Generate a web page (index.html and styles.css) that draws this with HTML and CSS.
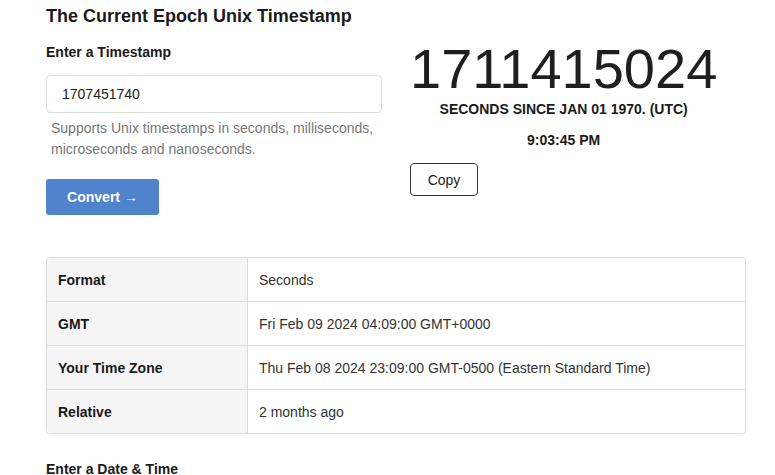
FILE: index.html
```html
<!DOCTYPE html>
<html lang="en">
<head>
    <meta charset="UTF-8">
    <meta name="viewport" content="width=device-width, initial-scale=1.0">
    <title>Epoch Converter</title>
    <link rel="stylesheet" href="styles.css">
</head>
<body>
<div class="page">
    <h2 class="title">The Current Epoch Unix Timestamp</h2>

    <div class="top">
        <div class="converter">
            <label class="label" for="stamp">Enter a Timestamp</label>
            <input type="text" id="stamp" class="stamp-input" value="1707451740">
            <p class="help">Supports Unix timestamps in seconds, milliseconds, microseconds and nanoseconds.</p>
            <button class="convert-btn">Convert &rarr;</button>
        </div>

        <div class="clock">
            <div class="clock-face">
                <div class="epoch" id="epoch">1711415024</div>
                <div class="since">SECONDS SINCE JAN 01 1970. (UTC)</div>
                <div class="time" id="time">9:03:45 PM</div>
            </div>
            <button class="copy-btn">Copy</button>
        </div>
    </div>

    <table class="results">
        <tr>
            <th>Format</th>
            <td>Seconds</td>
        </tr>
        <tr>
            <th>GMT</th>
            <td>Fri Feb 09 2024 04:09:00 GMT+0000</td>
        </tr>
        <tr>
            <th>Your Time Zone</th>
            <td>Thu Feb 08 2024 23:09:00 GMT-0500 (Eastern Standard Time)</td>
        </tr>
        <tr>
            <th>Relative</th>
            <td>2 months ago</td>
        </tr>
    </table>

    <div class="label date-label">Enter a Date &amp; Time</div>
</div>
</body>
</html>
```

FILE: styles.css
```css
body {
    margin: 0;
    font-family: "Liberation Sans", Arial, sans-serif;
    font-size: 14px;
    color: #222;
    background-color: #fff;
}

.page {
    width: 700px;
    margin-left: 46px;
}

.title {
    margin: 0;
    padding-top: 5px;
    font-size: 18px;
    line-height: 22px;
    font-weight: bold;
    color: #1a1a1a;
}

.top {
    display: flex;
    margin-top: 17px;
}

.converter {
    width: 336px;
    display: flex;
    flex-direction: column;
    align-items: flex-start;
}

.label {
    display: block;
    font-weight: bold;
    font-size: 14px;
    line-height: 17px;
    color: #1a1a1a;
}

.stamp-input {
    box-sizing: border-box;
    width: 336px;
    height: 38px;
    margin-top: 14px;
    padding: 0 15px;
    border: 1px solid #ddd;
    border-radius: 4px;
    font-family: inherit;
    font-size: 14px;
    color: #222;
}

.help {
    margin: 5px 0 0 5px;
    font-size: 14px;
    line-height: 21px;
    color: #777;
}

.convert-btn {
    margin-top: 19px;
    width: 113px;
    height: 36px;
    border: none;
    border-radius: 3px;
    background-color: #4f84cc;
    color: #fff;
    font-family: inherit;
    font-size: 14px;
    font-weight: bold;
}

.clock {
    margin-left: 28px;
    display: flex;
    flex-direction: column;
    align-items: flex-start;
}

.clock-face {
    text-align: center;
}

.epoch {
    font-size: 56px;
    line-height: 56px;
    margin-top: -3px;
    color: #1f1f1f;
}

.since,
.time {
    font-size: 14px;
    font-weight: bold;
    color: #1a1a1a;
    line-height: 16px;
}

.since {
    margin-top: 4px;
}

.time {
    margin-top: 15px;
}

.copy-btn {
    margin-top: 15px;
    width: 68px;
    height: 33px;
    background-color: #fff;
    border: 1px solid #333;
    border-radius: 4px;
    font-family: inherit;
    font-size: 14px;
    color: #222;
}

.results {
    width: 700px;
    margin-top: 42px;
    border-collapse: separate;
    border-spacing: 0;
    border: 1px solid #ddd;
    border-radius: 4px;
    overflow: hidden;
}

.results th,
.results td {
    height: 43px;
    padding: 0 11px;
    text-align: left;
    border-top: 1px solid #ddd;
    font-size: 14px;
}

.results tr:first-child th,
.results tr:first-child td {
    border-top: none;
}

.results th {
    width: 178px;
    background-color: #f5f5f5;
    border-right: 1px solid #ddd;
    font-weight: bold;
    color: #1a1a1a;
}

.results td {
    color: #333;
}

.date-label {
    margin-top: 27px;
}
```
